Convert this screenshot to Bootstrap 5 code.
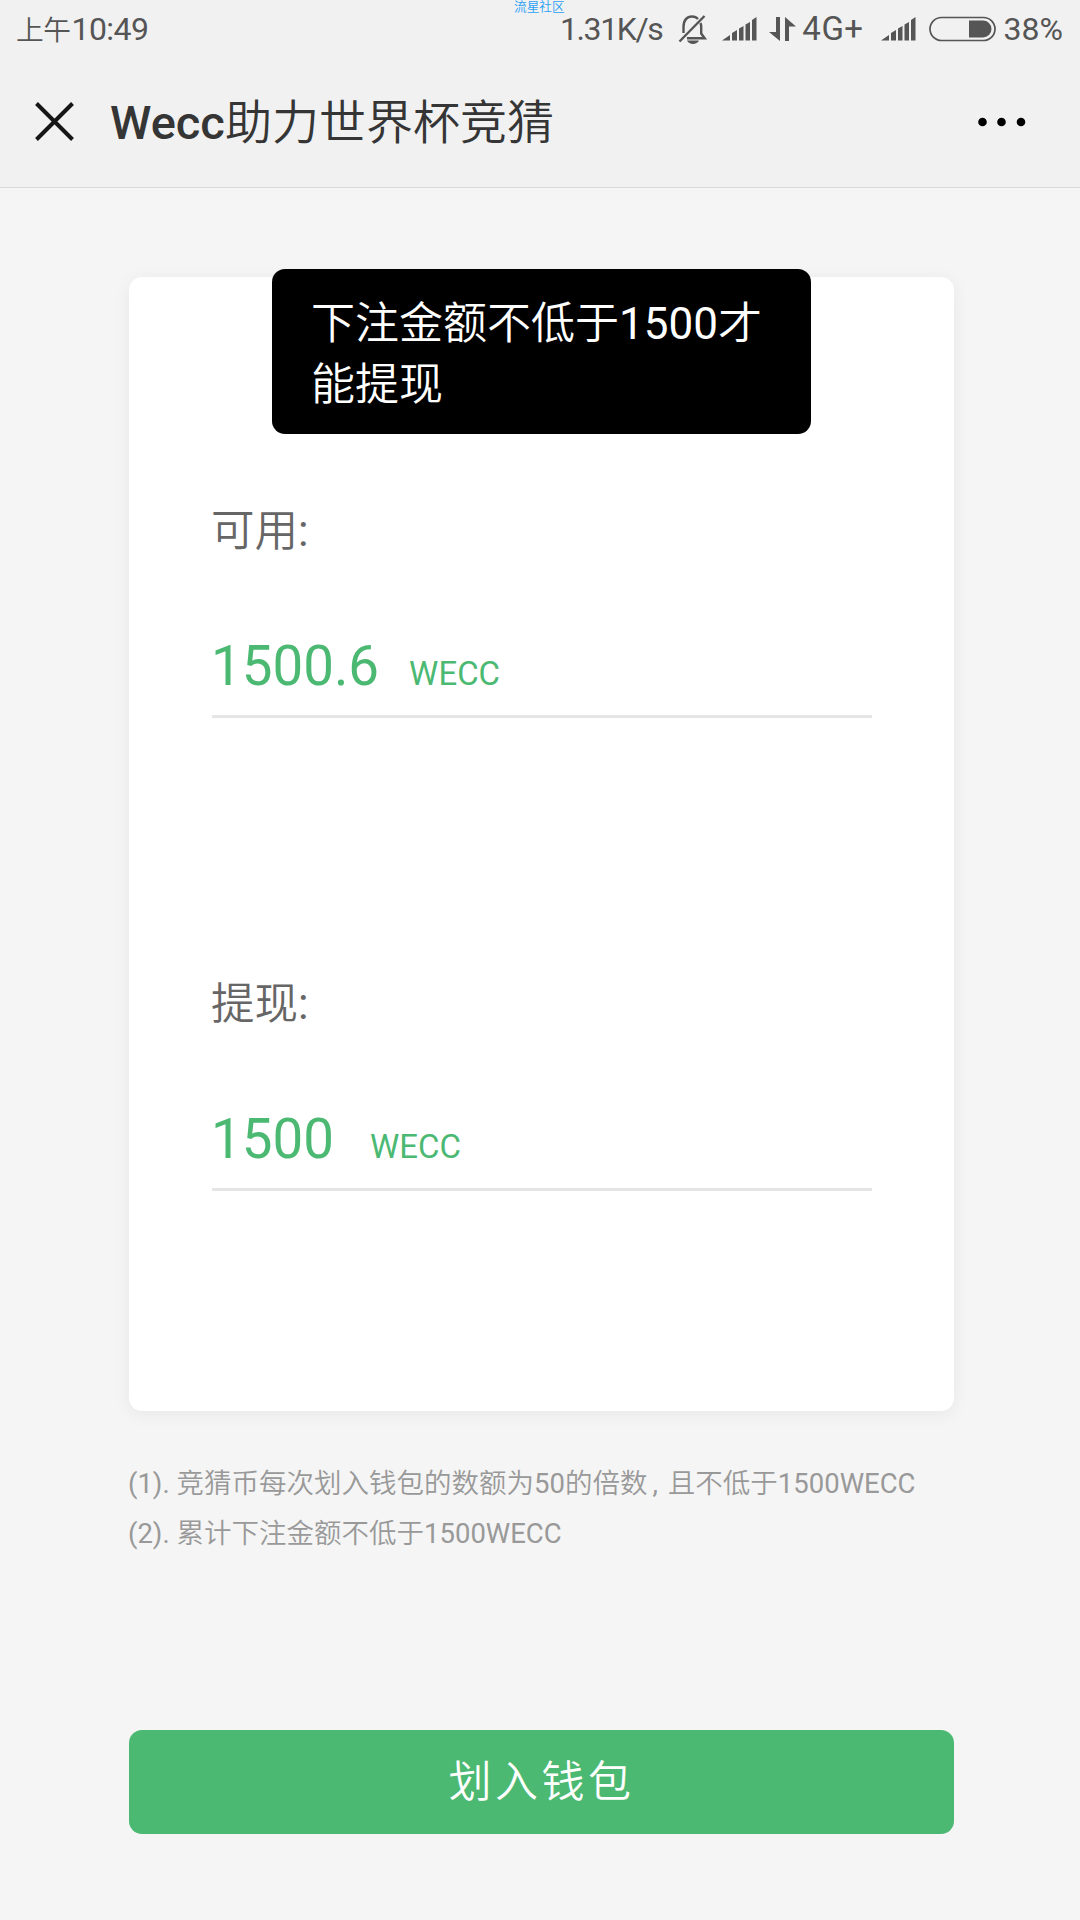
<!DOCTYPE html>
<html lang="zh-CN">
<head>
<meta charset="utf-8">
<meta name="viewport" content="width=device-width, initial-scale=1">
<title>Wecc助力世界杯竞猜</title>
<link href="https://cdn.jsdelivr.net/npm/bootstrap@5.3.0/dist/css/bootstrap.min.css" rel="stylesheet">
<style>
html{font-size:16px}
body{background:#f5f5f5;font-family:Roboto,"Noto Sans CJK SC DemiLight","Noto Sans CJK SC",sans-serif;min-height:1920px;line-height:1}
.topbar{background:#f1f1f1;height:188px;border-bottom:1px solid #d9d9d9}
.status{height:57px;color:#555;font-size:32px;padding:0 17px 0 16px;white-space:nowrap}
.status .cjk{font-size:27.7px;margin-right:1px}
.status .clock{letter-spacing:-.5px}
.rate{letter-spacing:-1.4px;margin-right:16px}
.bell{margin-right:14px}
.sig{margin-right:12px}
.arr{margin-right:6px}
.net{font-size:33px;letter-spacing:.5px;margin-right:17px}
.sig2{margin-right:13px}
.bat{margin-right:8px}
.brand-tag{top:0;left:514px;font-size:12.7px;line-height:13px;color:#2ba0f5}
.titlebar{height:129px;padding:0 54px 0 35px}
.title-text{font-size:47px;color:#353535;font-weight:400;line-height:60px;margin-left:36px;padding-top:3px}
.title-text b{font-weight:500}
.page-body{padding-left:129px}
.wallet{width:825px;margin-top:89px;height:1134px;border:0;border-radius:13px;box-shadow:0 3px 18px rgba(0,0,0,.06);padding:225px 82px 0 83px}
.toast-tip{top:-8px;left:143px;width:539px;height:165px;border-radius:13px;background:#000;color:#fff;font-size:44px;line-height:61px;padding:25px 40px 0 39px}
.field{height:216px;flex-shrink:0;border-bottom:3px solid #e5e5e5;margin-bottom:257px}
.field-label{font-size:43.5px;line-height:60px;color:#666;margin-left:-1px}
.field-value{color:#4cb973;font-size:54.7px;line-height:64px;margin:72px 0 0 -1px}
.unit{font-size:33px;margin-left:30px}
.unit-input{margin-left:36px}
.notes{width:825px;margin:48px 0 0 -1px;font-size:27.5px;line-height:50px;color:#999;white-space:nowrap}
.comma{padding:0 10px 0 5px}
.submit{--bs-btn-bg:#4cb973;--bs-btn-color:#fff;--bs-btn-border-width:0;width:825px;height:104px;border-radius:13px;font-size:43px;letter-spacing:3.5px;margin-top:171px}
</style>
<script src="https://cdn.jsdelivr.net/npm/bootstrap@5.3.0/dist/js/bootstrap.bundle.min.js"></script>
</head>
<body>
<header class="topbar position-relative">
  <span class="brand-tag position-absolute">流星社区</span>
  <div class="status d-flex align-items-center">
    <span class="clock me-auto"><span class="cjk">上午</span>10:49</span>
    <span class="rate">1.31K/s</span>
    <svg class="bell" width="30" height="32" viewBox="0 0 30 32" fill="none" stroke="#555" stroke-width="2.4"><path d="M5.500 20V14C5.500 7 9 3.500 14 3.500c2.500 0 4.500.8 6 2.500M22.500 10c.5 1.300.7 2.500.7 4v6.500l3.500 4.700H9"/><path d="M1.500 28.500 26.500 3"/><path d="M9 27.500h12c-2 4.500-10 4.500-12 0z" fill="#555" stroke="none"/></svg>
    <svg class="sig" width="35" height="26" viewBox="0 0 35 26" fill="#555"><path d="M0 24.500 8 19v5.500zM10 17l5-3v10.500h-5zM17 12.500 21.500 10v14.500H17zM23.500 8.500l4.500-2.500v18.500h-4.500zM30 4l4.500-3v23.500H30z"/></svg>
    <svg class="arr" width="27" height="26" viewBox="0 0 27 26" fill="#555"><path d="M7 1h4v24L0 16h7zM16 1l11 9.500h-7V25h-4z"/></svg>
    <span class="net">4G+</span>
    <svg class="sig2" width="35" height="26" viewBox="0 0 35 26" fill="#555"><path d="M0 24.500 8 19v5.500zM10 17l5-3v10.500h-5zM17 12.500 21.500 10v14.500H17zM23.500 8.500l4.500-2.500v18.500h-4.500zM30 4l4.500-3v23.500H30z"/></svg>
    <svg class="bat" width="67" height="26" viewBox="0 0 67 26"><rect x="1" y="1.500" width="65" height="23" rx="11.500" fill="none" stroke="#555" stroke-width="1.700"/><path d="M40 4.500h14a8.500 8.500 0 0 1 0 17H40z" fill="#555"/></svg>
    <span class="pct">38%</span>
  </div>
  <div class="titlebar d-flex align-items-center">
    <svg width="39" height="39" viewBox="0 0 39 39" stroke="#161616" stroke-width="4"><path d="m1.500 1.500 36 36m0-36-36 36"/></svg>
    <h1 class="title-text mb-0"><b>Wecc</b>助力世界杯竞猜</h1>
    <svg class="ms-auto" width="48" height="10" viewBox="0 0 48 10"><circle cx="4.500" cy="5" r="4.300"/><circle cx="23.500" cy="5" r="4.300"/><circle cx="43" cy="5" r="4.300"/></svg>
  </div>
</header>
<main class="page-body d-flex flex-column align-items-start">
  <section class="wallet card">
    <div class="toast-tip position-absolute">下注金额不低于1500才能提现</div>
    <div class="field">
      <div class="field-label">可用:</div>
      <div class="field-value d-flex align-items-baseline">1500.6<span class="unit">WECC</span></div>
    </div>
    <div class="field">
      <div class="field-label">提现:</div>
      <div class="field-value d-flex align-items-baseline">1500<span class="unit unit-input">WECC</span></div>
    </div>
  </section>
  <div class="notes">
    <div>(1). 竞猜币每次划入钱包的数额为50的倍数<span class="comma">,</span>且不低于1500WECC</div>
    <div>(2). 累计下注金额不低于1500WECC</div>
  </div>
  <button type="button" class="submit btn">划入钱包</button>
</main>
</body>
</html>
